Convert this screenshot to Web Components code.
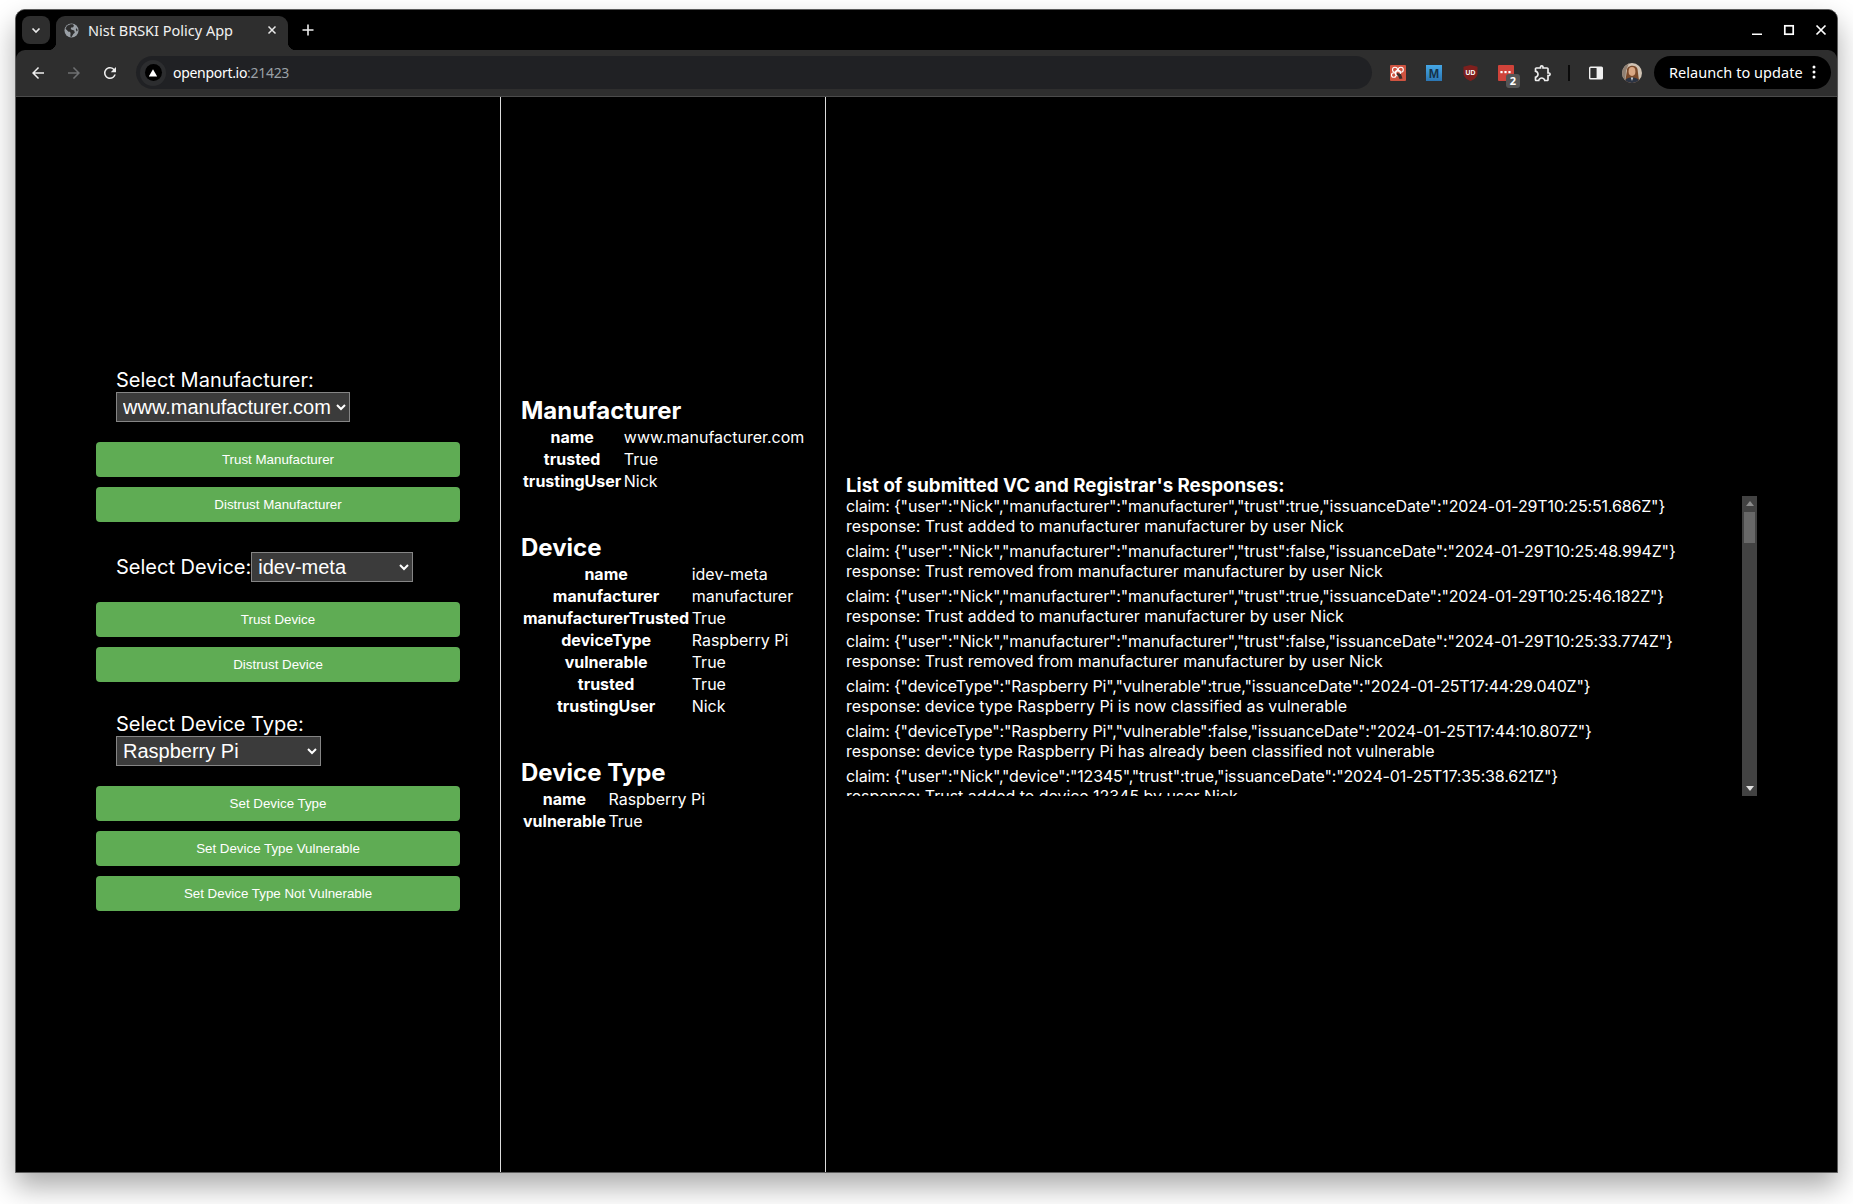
<!DOCTYPE html>
<html lang="en"><head><meta charset="utf-8"><title>Nist BRSKI Policy App</title>
<style>
html,body{margin:0;background:#fff;}
body{width:1853px;height:1204px;overflow:hidden;padding:9px 15px 0;box-sizing:border-box;font-family:"Liberation Sans",Arial,sans-serif;}
app-main{display:grid;}
</style></head><body>

<browser-window>
  <browser-tabstrip slot="tabs" tab-title="Nist BRSKI Policy App"></browser-tabstrip>
  <browser-toolbar slot="bar" host-part="openport.io" port-part=":21423"></browser-toolbar>
  <app-main>
    <control-column slot="controls">
      <picker-field label="Select Manufacturer:" value="www.manufacturer.com" width="234" stacked></picker-field>
      <action-button>Trust Manufacturer</action-button>
      <action-button>Distrust Manufacturer</action-button>
      <picker-field label="Select Device:" value="idev-meta" width="162" spaced></picker-field>
      <action-button>Trust Device</action-button>
      <action-button>Distrust Device</action-button>
      <picker-field label="Select Device Type:" value="Raspberry Pi" width="205" stacked spaced></picker-field>
      <action-button>Set Device Type</action-button>
      <action-button>Set Device Type Vulnerable</action-button>
      <action-button>Set Device Type Not Vulnerable</action-button>
    </control-column>
    <info-column slot="info">
      <info-table heading="Manufacturer">
        <info-row key="name">www.manufacturer.com</info-row>
        <info-row key="trusted">True</info-row>
        <info-row key="trustingUser">Nick</info-row>
      </info-table>
      <info-table heading="Device">
        <info-row key="name">idev-meta</info-row>
        <info-row key="manufacturer">manufacturer</info-row>
        <info-row key="manufacturerTrusted">True</info-row>
        <info-row key="deviceType">Raspberry Pi</info-row>
        <info-row key="vulnerable">True</info-row>
        <info-row key="trusted">True</info-row>
        <info-row key="trustingUser">Nick</info-row>
      </info-table>
      <info-table heading="Device Type">
        <info-row key="name">Raspberry Pi</info-row>
        <info-row key="vulnerable">True</info-row>
      </info-table>
    </info-column>
    <log-column slot="log" heading="List of submitted VC and Registrar's Responses:">
      <log-entry claim='{"user":"Nick","manufacturer":"manufacturer","trust":true,"issuanceDate":"2024-01-29T10:25:51.686Z"}' response="Trust added to manufacturer manufacturer by user Nick"></log-entry>
      <log-entry claim='{"user":"Nick","manufacturer":"manufacturer","trust":false,"issuanceDate":"2024-01-29T10:25:48.994Z"}' response="Trust removed from manufacturer manufacturer by user Nick"></log-entry>
      <log-entry claim='{"user":"Nick","manufacturer":"manufacturer","trust":true,"issuanceDate":"2024-01-29T10:25:46.182Z"}' response="Trust added to manufacturer manufacturer by user Nick"></log-entry>
      <log-entry claim='{"user":"Nick","manufacturer":"manufacturer","trust":false,"issuanceDate":"2024-01-29T10:25:33.774Z"}' response="Trust removed from manufacturer manufacturer by user Nick"></log-entry>
      <log-entry claim='{"deviceType":"Raspberry Pi","vulnerable":true,"issuanceDate":"2024-01-25T17:44:29.040Z"}' response="device type Raspberry Pi is now classified as vulnerable"></log-entry>
      <log-entry claim='{"deviceType":"Raspberry Pi","vulnerable":false,"issuanceDate":"2024-01-25T17:44:10.807Z"}' response="device type Raspberry Pi has already been classified not vulnerable"></log-entry>
      <log-entry claim='{"user":"Nick","device":"12345","trust":true,"issuanceDate":"2024-01-25T17:35:38.621Z"}' response="Trust added to device 12345 by user Nick"></log-entry>
    </log-column>
  </app-main>
</browser-window>

<script>
function def(name, html){
  customElements.define(name, class extends HTMLElement{
    constructor(){super();this.attachShadow({mode:'open'}).innerHTML=typeof html==='function'?html(this):html;}
  });
}

def('browser-window',`<style>
:host{display:flex;flex-direction:column;width:1823px;height:1164px;box-sizing:border-box;background:#000;
  border:1px solid #5c5c5c;border-radius:10px 10px 0 0;overflow:hidden;
  box-shadow:0 14px 28px rgba(0,0,0,.33);}
</style><slot name="tabs"></slot><slot name="bar"></slot><slot></slot>`);

def('browser-tabstrip',h=>`<style>
:host{display:flex;align-items:flex-start;height:40px;box-sizing:border-box;padding:6px 0 0 6px;background:#000;color:#fff;
  font:14.5px "Noto Sans",sans-serif;flex:none;}
.chip{width:28px;height:28px;border-radius:8px;background:#2e2e2e;display:flex;align-items:center;justify-content:center;margin-right:6px;}
.tab{position:relative;width:232px;height:34px;background:#2e2e2e;border-radius:9px 9px 0 0;display:flex;align-items:center;box-sizing:border-box;padding:0 0 6px 8px;}
.tab::before,.tab::after{content:"";position:absolute;bottom:0;width:8px;height:8px;}
.tab::before{left:-8px;background:radial-gradient(circle at 0 0,transparent 8px,#2e2e2e 8.5px);}
.tab::after{right:-8px;background:radial-gradient(circle at 100% 0,transparent 8px,#2e2e2e 8.5px);}
.fav{width:15px;height:15px;flex:none;}
.title{margin-left:9px;white-space:nowrap;flex:1;color:#f1f1f1;}
.x{width:12px;height:12px;margin-right:10px;flex:none;}
.plus{margin:7px 0 0 13px;width:14px;height:14px;}
.ctl{margin-left:auto;display:flex;height:34px;}
.ctl div{width:32px;height:28px;display:flex;align-items:center;justify-content:center;}
</style>
<div class="chip"><svg width="12" height="12" viewBox="0 0 12 12"><path d="M2.5 4.5 6 8l3.5-3.5" fill="none" stroke="#e8e8e8" stroke-width="1.7"/></svg></div>
<div class="tab">
  <svg class="fav" viewBox="0 0 16 16"><circle cx="8" cy="8" r="7.5" fill="#9aa0a6"/><path d="M7 1.2 3.2 3 1.6 6l3.2 3.4h1.6l.6 1.4-.3 3.6 1.4.4 1.8-3 1.6-1.5-.6-2.2-2.6-.8-1.2-1L8 4.6l1.6.2L10.6 3 9.6 1.4zM12.5 6.5l1.2-.8.9 2.4-1.2 1z" fill="#2e2e2e"/></svg>
  <span class="title">${h.getAttribute('tab-title')}</span>
  <svg class="x" viewBox="0 0 12 12"><path d="M2.5 2.5l7 7M9.5 2.5l-7 7" stroke="#e8e8e8" stroke-width="1.5"/></svg>
</div>
<svg class="plus" viewBox="0 0 14 14"><path d="M7 1.5v11M1.5 7h11" stroke="#eee" stroke-width="1.6"/></svg>
<div class="ctl">
  <div><svg width="12" height="12" viewBox="0 0 12 12"><path d="M1 10.2h10" stroke="#fff" stroke-width="1.5"/></svg></div>
  <div><svg width="12" height="12" viewBox="0 0 12 12"><rect x="1.8" y="1.8" width="8.4" height="8.4" fill="none" stroke="#fff" stroke-width="1.7"/></svg></div>
  <div><svg width="12" height="12" viewBox="0 0 12 12"><path d="M1.5 1.5l9 9M10.5 1.5l-9 9" stroke="#fff" stroke-width="1.7"/></svg></div>
</div>`);

def('browser-toolbar',h=>`<style>
:host{display:flex;align-items:center;height:47px;box-sizing:border-box;padding:0 6px 1px 4px;background:#2e2e2e;
  border-bottom:1px solid #4b4b4b;border-radius:9px 9px 0 0;flex:none;color:#fff;font:14px "Noto Sans",sans-serif;}
.b{width:36px;height:36px;display:flex;align-items:center;justify-content:center;flex:none;position:relative;}
.omni{flex:1;height:33px;margin:0 8px;background:#202124;border-radius:17px;display:flex;align-items:center;box-sizing:border-box;padding-left:4px;}
.chip{width:26px;height:26px;border-radius:50%;background:#2c2d2f;display:flex;align-items:center;justify-content:center;flex:none;}
.dot{width:17px;height:17px;border-radius:50%;background:#000;display:flex;align-items:center;justify-content:center;}
.url{margin-left:7px;letter-spacing:-.3px;white-space:nowrap;color:#fff;}
.url span{color:#9aa0a6;}
.sep{width:18px;display:flex;justify-content:center;flex:none;}
.sep i{display:block;width:2px;height:16px;background:#0a0a0a;}
.badge{position:absolute;left:18px;top:19px;width:14px;height:14px;border-radius:3px;background:#555;color:#fff;font:700 11px/14px "Noto Sans",sans-serif;text-align:center;}
.pill{width:177px;height:33px;margin-left:4px;background:#000;border-radius:17px;display:flex;align-items:center;box-sizing:border-box;padding:0 0 1px 15px;flex:none;font-size:14.5px;}
.pill span{white-space:nowrap;letter-spacing:.05px;flex:1;}
.pill svg{margin-right:15px;}
</style>
<div class="b"><svg width="18" height="18" viewBox="0 0 24 24"><path fill="#eee" d="M20 11H7.83l5.59-5.59L12 4l-8 8 8 8 1.41-1.41L7.83 13H20v-2z"/></svg></div>
<div class="b"><svg width="18" height="18" viewBox="0 0 24 24"><path fill="#6f7072" d="M4 11h12.17l-5.59-5.59L12 4l8 8-8 8-1.41-1.41L16.17 13H4v-2z"/></svg></div>
<div class="b"><svg width="18" height="18" viewBox="0 0 24 24"><path fill="#eee" d="M17.65 6.35A7.958 7.958 0 0 0 12 4c-4.42 0-7.99 3.58-7.99 8s3.57 8 7.99 8c3.73 0 6.84-2.55 7.73-6h-2.08A5.99 5.99 0 0 1 12 18c-3.31 0-6-2.69-6-6s2.69-6 6-6c1.66 0 3.14.69 4.22 1.78L13 11h7V4l-2.35 2.35z"/></svg></div>
<div class="omni">
  <div class="chip"><div class="dot"><svg width="10" height="10" viewBox="0 0 10 10"><path d="M5 1.2 9.2 8.6H.8z" fill="#fff"/></svg></div></div>
  <div class="url">${h.getAttribute('host-part')}<span>${h.getAttribute('port-part')}</span></div>
</div>
<div class="b"><svg width="16" height="16" viewBox="0 0 16 16"><rect width="16" height="16" rx="1" fill="#cf5340"/><g fill="none" stroke="#fff" stroke-width="1.1"><circle cx="5" cy="4.8" r="2.5"/><circle cx="10.8" cy="4.8" r="2.5"/><circle cx="3.8" cy="10" r="2.3"/><circle cx="8" cy="8" r="2.6"/></g><path d="M7 8l4 1 1.5 4.4-3 .6-1.4-3-1.4-1z" fill="#3a2b28"/></svg></div>
<div class="b"><svg width="16" height="16" viewBox="0 0 16 16"><defs><linearGradient id="mg" x1="0" y1="0" x2="0" y2="1"><stop offset="0" stop-color="#45a7e6"/><stop offset="1" stop-color="#2b76b3"/></linearGradient></defs><rect width="16" height="16" fill="url(#mg)"/><text x="8" y="12.6" text-anchor="middle" font-family="Liberation Sans" font-weight="700" font-size="12.5" fill="#16324a">M</text></svg></div>
<div class="b"><svg width="15" height="16" viewBox="0 0 15 16"><path d="M7.5 0 14.5 1.8V8.5C14.5 12 11 14.6 7.5 16 4 14.6.5 12 .5 8.5V1.8z" fill="#7e1f1d"/><text x="7.5" y="10" text-anchor="middle" font-family="Liberation Sans" font-weight="700" font-size="6.8" fill="#fff">UD</text></svg></div>
<div class="b"><svg width="16" height="16" viewBox="0 0 16 16"><rect width="16" height="16" rx="1" fill="#d0433a"/><g fill="#fff"><rect x="2.4" y="6" width="2.2" height="2.2"/><rect x="6.4" y="6" width="2.2" height="2.2"/><rect x="10.4" y="6" width="2.2" height="2.2"/></g></svg><span class="badge">2</span></div>
<div class="b"><svg style="margin-left:2px" width="20" height="20" viewBox="0 0 24 24"><path fill="#eee" d="M10.5 4.5c.28 0 .5.22.5.5v2h6v6h2c.28 0 .5.22.5.5s-.22.5-.5.5h-2v6h-2.12c-.68-1.75-2.39-3-4.38-3s-3.7 1.25-4.38 3H4v-2.12c1.75-.68 3-2.39 3-4.38 0-1.99-1.24-3.7-2.99-4.38L4 7h6V5c0-.28.22-.5.5-.5m0-2C9.12 2.5 8 3.62 8 5H4c-1.1 0-1.99.9-1.99 2v3.8h.29c1.49 0 2.7 1.21 2.7 2.7s-1.21 2.7-2.7 2.7H2V20c0 1.1.9 2 2 2h3.8v-.3c0-1.49 1.21-2.7 2.7-2.7 1.49 0 2.7 1.21 2.7 2.7v.3H17c1.1 0 2-.9 2-2v-4c1.38 0 2.5-1.12 2.5-2.5S20.38 11 19 11V7c0-1.1-.9-2-2-2h-4c0-1.38-1.12-2.5-2.5-2.5z"/></svg></div>
<div class="sep"><i></i></div>
<div class="b"><svg width="16" height="16" viewBox="0 0 16 16"><rect x="1" y="1.5" width="14" height="13" rx="1.6" fill="#f0f0f0"/><rect x="2.4" y="2.9" width="6.2" height="10.2" rx=".4" fill="#2e2e2e"/></svg></div>
<div class="b"><svg width="20" height="20" viewBox="0 0 20 20"><defs><clipPath id="av"><circle cx="10" cy="10" r="10"/></clipPath></defs><g clip-path="url(#av)"><rect width="20" height="20" fill="#cfc2b3"/><path d="M0 0h7L4 8 3 20H0z" fill="#8f7f72"/><path d="M5 7c0-5 9-6 10.500-1l1 8 1 6H3z" fill="#7a4a2b"/><ellipse cx="10" cy="8.500" rx="3.400" ry="4.400" fill="#d9a783"/><path d="M2 20c.5-4 4-5.500 8-5.500s7.500 1.500 8 5.500z" fill="#2b3444"/><path d="M8.800 14.500h2.400L10 18z" fill="#d8d8d8"/></g></svg></div>
<div class="pill"><span>Relaunch to update</span><svg width="4" height="14" viewBox="0 0 4 14"><circle cx="2" cy="2" r="1.500" fill="#fff"/><circle cx="2" cy="7" r="1.500" fill="#fff"/><circle cx="2" cy="12" r="1.500" fill="#fff"/></svg></div>`);

def('app-main',`<style>
:host{display:grid;grid-template-columns:485px 325px 1fr;flex:1;min-height:0;background:#000;color:#fff;}
</style><slot name="controls"></slot><slot name="info"></slot><slot name="log"></slot>`);

def('control-column',`<style>
:host{display:flex;flex-direction:column;justify-content:center;box-sizing:border-box;padding:20px 40px 0 80px;border-right:1px solid #dcdcdc;}
</style><slot></slot>`);

def('picker-field',h=>{
  const w=h.getAttribute('width');
  return `<style>
:host{display:block;padding-left:20px;margin-bottom:20px;font:20px/24px Inter,sans-serif;color:#fff;}
:host([spaced]){margin-top:20px;}
:host([stacked]) label{display:block;}
:host(:not([stacked])) .wrap{display:flex;align-items:center;}
select{color-scheme:dark;width:${w}px;height:30px;font:20px "Liberation Sans",Arial,sans-serif;padding:0 0 0 2px;background:#3b3b3b;color:#fff;display:block;}
</style><div class="wrap"><label for="s">${h.getAttribute('label')}</label><select id="s"><option>${h.getAttribute('value')}</option></select></div>`;
});

def('action-button',`<style>
:host{display:block;margin-bottom:10px;}
button{display:block;width:364px;height:35px;background:#5fac54;color:#fff;border:0;border-radius:4px;font:13.33px "Liberation Sans",Arial,sans-serif;padding:0;}
</style><button><slot></slot></button>`);

def('info-column',`<style>
:host{display:flex;flex-direction:column;justify-content:center;box-sizing:border-box;padding-left:19px;border-right:1px solid #dcdcdc;}
</style><slot></slot>`);

def('info-table',h=>`<style>
:host{display:block;margin-bottom:40px;color:#fff;font-family:Inter,sans-serif;}
h2{margin:0 0 0 1px;font-size:24px;line-height:29px;font-weight:700;}
.t{display:table;border-spacing:2px;}
</style><h2>${h.getAttribute('heading')}</h2><div class="t"><slot></slot></div>`);

def('info-row',h=>`<style>
:host{display:table-row;font:16px/18px Inter,sans-serif;color:#fff;}
.k,.v{display:table-cell;padding:1px;white-space:nowrap;}
.k{font-weight:700;text-align:center;padding-right:0;}
.v{padding-left:.5px;}
</style><div class="k">${h.getAttribute('key')}</div><div class="v"><slot></slot></div>`);

def('log-column',h=>`<style>
:host{display:flex;flex-direction:column;justify-content:center;box-sizing:border-box;padding:0 80px 0 20px;font-family:Inter,sans-serif;color:#fff;}
h3{margin:0 0 -1px;padding-top:2px;font-size:18.72px;line-height:22px;font-weight:700;white-space:nowrap;}
.row{display:flex;height:300px;}
.list{flex:1;min-width:0;overflow:hidden;}
.sb{width:15px;background:#424242;flex:none;display:flex;flex-direction:column;align-items:center;}
.sb svg{display:block;}
.up{margin-top:5px;}
.thumb{width:11px;height:31px;background:#686868;margin-top:6px;flex:none;}
.dn{margin-top:auto;margin-bottom:5px;}
</style><h3>${h.getAttribute('heading')}</h3>
<div class="row"><div class="list"><slot></slot></div>
<div class="sb" aria-hidden="true"><svg class="up" width="8" height="5" viewBox="0 0 8 5"><path d="M4 0 8 5H0z" fill="#8d8d8d"/></svg><div class="thumb"></div><svg class="dn" width="8" height="5" viewBox="0 0 8 5"><path d="M0 0h8L4 5z" fill="#e0e0e0"/></svg></div></div>`);

def('log-entry',h=>`<style>
:host{display:block;margin-bottom:5px;font:16px/20px Inter,sans-serif;color:#fff;white-space:nowrap;}
.c{letter-spacing:-.15px;}
.r{letter-spacing:-.04px;}
</style><div class="c">claim: ${h.getAttribute('claim').replace(/&/g,'&amp;').replace(/</g,'&lt;')}</div><div class="r">response: ${h.getAttribute('response')}</div>`);
</script>
</body></html>
